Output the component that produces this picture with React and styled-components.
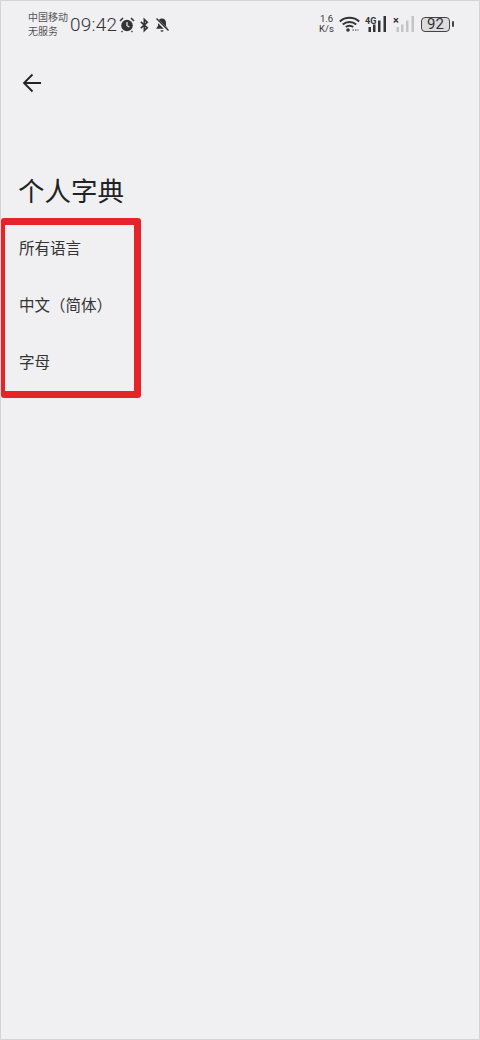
import React from "react";
import styled, { createGlobalStyle } from "styled-components";

const Global = createGlobalStyle`
  html, body { margin: 0; padding: 0; background: #f0f0f3; }
  * { box-sizing: border-box; }
`;
const Page = styled.div`
  width: 480px; height: 1040px; overflow: hidden; background: #f0f0f3;
  box-shadow: inset 0 0 0 1px #d4d4d6;
  padding: 9px 0 0 1px;
  font-family: "Noto Sans CJK SC", "Noto Sans", sans-serif; color: #1c1c1e;
`;
const StatusBar = styled.div`
  height: 38px; padding: 0 30px 0 27px; display: flex; align-items: flex-start; justify-content: space-between; color: #333;
`;
const Side = styled.div`display: flex; align-items: center; height: 30px;`;
const Carrier = styled.div`
  font-size: 10px; line-height: 14px; width: 42px; color: #555;
`;
const Time = styled.div`
  font-family: Roboto, sans-serif; font-size: 19px; line-height: 30px; font-weight: 300; letter-spacing: .2px; width: 49px; margin-top: 2px;
`;
const Icons = styled.div`display: flex; align-items: center; gap: 4px; margin-top: 1px;`;
const Speed = styled.div`
  font-family: Roboto, sans-serif; font-size: 9.500px; line-height: 10px; text-align: center; width: 17px; margin-right: 4px;
`;
const Battery = styled.div`
  width: 29px; height: 15px; border: 1px solid #444; border-radius: 4px; background: #dcdcde; font: 400 15px/13px Roboto, sans-serif;
  text-align: center; margin-left: 5px; position: relative;
  &::after { content: ""; position: absolute; right: -5px; top: 3px; width: 2px; height: 6px; background: #444; border-radius: 1px; }
`;
const Header = styled.div`height: 72px; padding: 24px 0 0 20px;`;
const Title = styled.h1`
  margin: 51.500px 0 0 17px; font-size: 26.500px; line-height: 38px; font-weight: 400; color: #222;
`;
const Highlight = styled.div`
  margin-top: 9.500px; width: 140px; height: 180px; border-style: solid; border-color: #e5242a; border-width: 7px 7px 7px 4px; border-radius: 3px;
  padding: 0 0 0 14px; display: flex; flex-direction: column; gap: 14px;
`;
const Row = styled.div`
  height: 43px; flex: none; display: flex; align-items: center; font-size: 15.500px; color: #333; white-space: nowrap;
`;

const Alarm = () => (
  <svg width="16" height="16" viewBox="0 0 16 16" fill="#333">
    <circle cx="8" cy="8.500" r="5.800" />
    <path d="M8 5v3.700l2.400 1.400" fill="none" stroke="#f0f0f3" strokeWidth="1.200" />
    <path d="M1 4l3-3M15 4l-3-3" stroke="#333" strokeWidth="1.500" />
    <path d="M3.500 14l-1 1.200M12.500 14l1 1.200" stroke="#333" strokeWidth="1.200" />
  </svg>
);
const Bluetooth = () => (
  <svg width="11" height="16" viewBox="0 0 12 16" fill="none" stroke="#333" strokeWidth="1.800">
    <path d="M2 4.500l7 6.500-3.200 3V2l3.200 3-7 6.500" />
  </svg>
);
const BellOff = () => (
  <svg width="16" height="16" viewBox="0 0 16 16" fill="#333">
    <path d="M8 1.500c2.600 0 4 2 4 4.500v3l2 2.800H2l2-2.800V6c0-2.500 1.400-4.500 4-4.500z" />
    <path d="M6.500 13.200h3a1.500 1.500 0 0 1-3 0z" />
    <path d="M2 2l12 12" stroke="#f0f0f3" strokeWidth="3" />
    <path d="M2.500 1.500l12 12" stroke="#333" strokeWidth="1.400" />
  </svg>
);
const Wifi = () => (
  <svg width="21" height="16" viewBox="0 0 21 16" fill="none" stroke="#333" strokeWidth="2">
    <path d="M.8 5.500c5.300-5 14.100-5 19.400 0M3.800 8.500c3.600-3.300 9.800-3.300 13.400 0M6.800 11c2-1.700 5.400-1.700 7.400 0" />
    <circle cx="9" cy="14" r="1.800" fill="#333" stroke="none" />
    <path d="M13.500 14h6" strokeWidth="1" strokeDasharray="1.500 1" />
  </svg>
);
const Signal = styled.svg`margin-left: ${(p) => p.$gap}px;`;
const Bars = ({ color, label, gap, size }) => (
  <Signal $gap={gap} width="23" height="18" viewBox="0 0 23 18">
    <text x="0" y="8.500" fontFamily="Roboto, sans-serif" fontWeight="700" fontSize={size} fill="#333">{label}</text>
    <g fill={color}>
      <rect x="3.500" y="12" width="2.500" height="5" />
      <rect x="8" y="9.500" width="2.500" height="7.500" />
      <rect x="13" y="5.500" width="2.500" height="11.500" />
      <rect x="18.500" y="1" width="2.500" height="16" />
    </g>
  </Signal>
);
const BackArrow = () => (
  <svg width="24" height="24" viewBox="0 0 24 24" fill="none" stroke="#222" strokeWidth="1.800">
    <path d="M20 12H3.500M11.500 3.500L3 12l8.500 8.500" />
  </svg>
);

export default function App() {
  return (
    <Page>
      <Global />
      <StatusBar>
        <Side>
          <Carrier>中国移动<br />无服务</Carrier>
          <Time>09:42</Time>
          <Icons>
            <Alarm />
            <Bluetooth />
            <BellOff />
          </Icons>
        </Side>
        <Side>
          <Speed>1.6<br />K/s</Speed>
          <Wifi />
          <Bars color="#333" label="4G" gap={5} size={9} />
          <Bars color="#c4c4c6" label="×" gap={5} size={11} />
          <Battery>92</Battery>
        </Side>
      </StatusBar>
      <Header><BackArrow /></Header>
      <Title>个人字典</Title>
      <Highlight>
        <Row>所有语言</Row>
        <Row>中文（简体）</Row>
        <Row>字母</Row>
      </Highlight>
    </Page>
  );
}
